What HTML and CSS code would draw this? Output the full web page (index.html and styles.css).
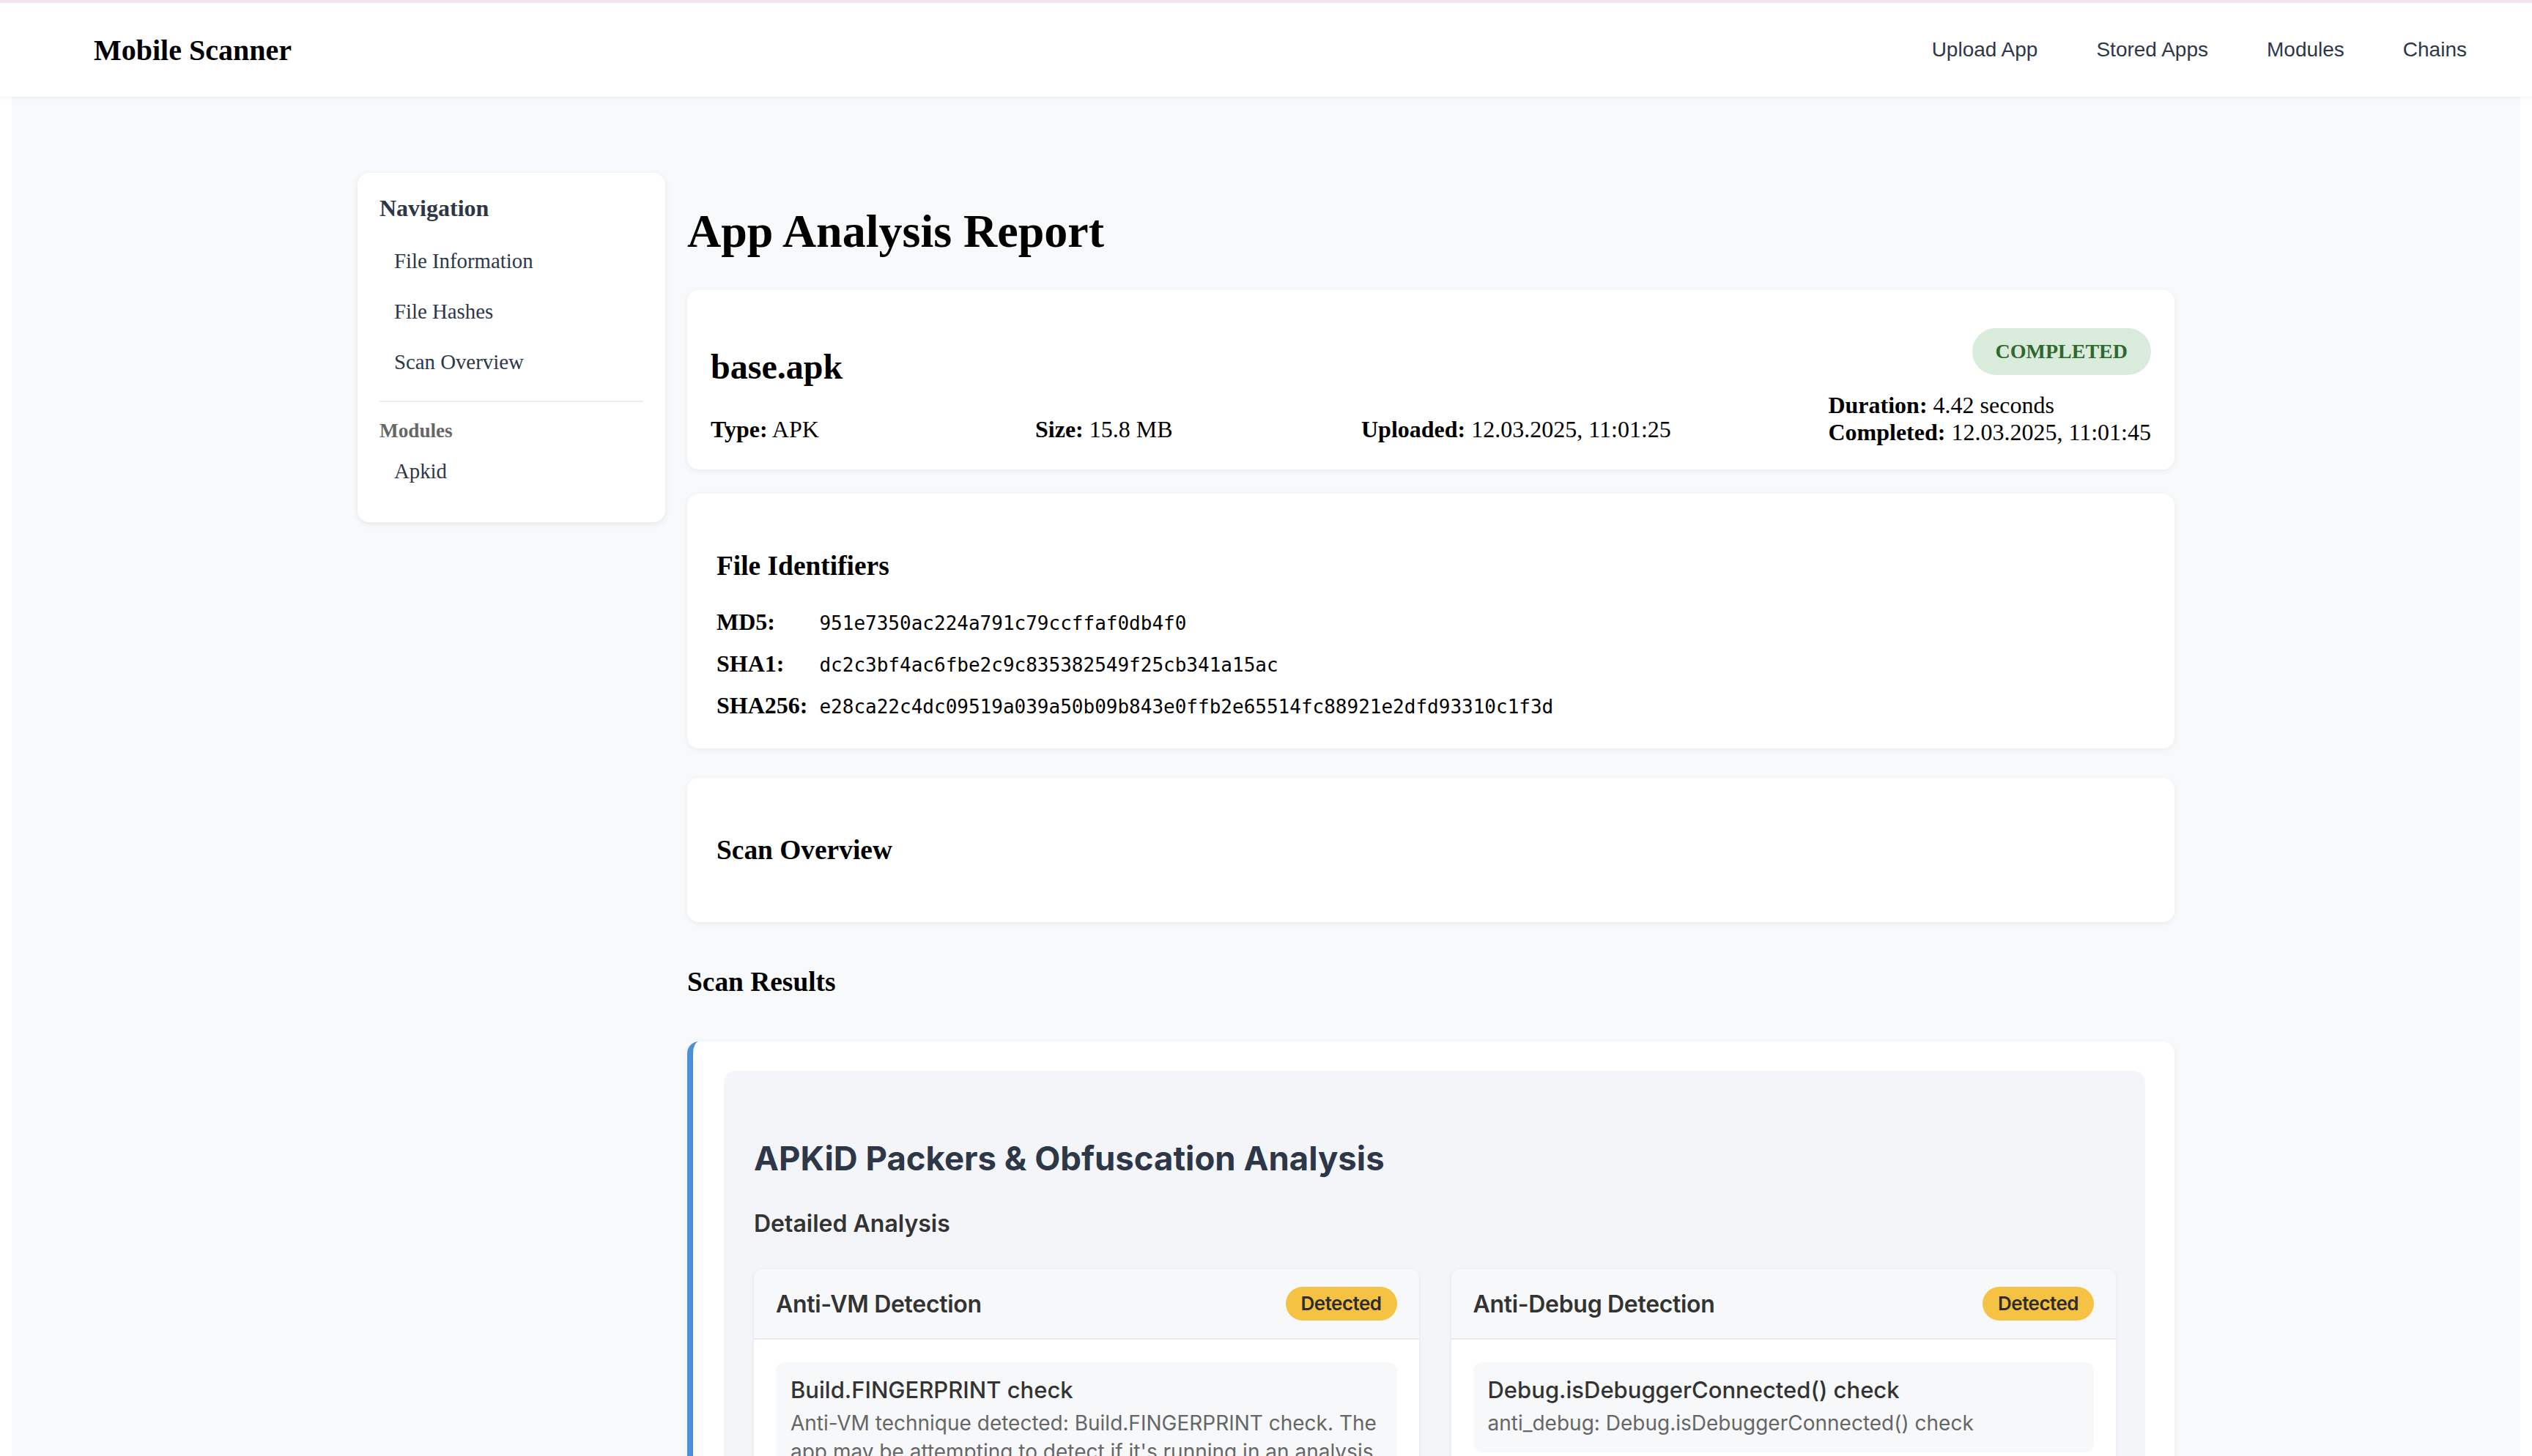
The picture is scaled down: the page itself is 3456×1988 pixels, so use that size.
FILE: index.html
```html
<!DOCTYPE html>
<html lang="en">
<head>
<meta charset="utf-8">
<title>Mobile Scanner – App Analysis Report</title>
<link rel="stylesheet" href="styles.css">
</head>
<body>
<header class="topbar">
  <div class="brand">Mobile Scanner</div>
  <nav class="topnav">
    <a href="#">Upload App</a>
    <a href="#">Stored Apps</a>
    <a href="#">Modules</a>
    <a href="#">Chains</a>
  </nav>
</header>

<div class="page">
  <div class="layout">
    <aside class="sidenav">
      <h3 class="sidenav-title">Navigation</h3>
      <a class="sidenav-link" href="#file-info">File Information</a>
      <a class="sidenav-link" href="#file-hashes">File Hashes</a>
      <a class="sidenav-link" href="#scan-overview">Scan Overview</a>
      <div class="sidenav-divider"></div>
      <div class="sidenav-section">Modules</div>
      <a class="sidenav-link" href="#apkid">Apkid</a>
    </aside>

    <main class="report">
      <h1 class="report-title">App Analysis Report</h1>

      <section class="card file-card" id="file-info">
        <div class="file-main">
          <h2 class="file-name">base.apk</h2>
          <div class="file-meta">
            <div><strong>Type:</strong> APK</div>
            <div><strong>Size:</strong> 15.8 MB</div>
            <div><strong>Uploaded:</strong> 12.03.2025, 11:01:25</div>
          </div>
        </div>
        <div class="file-status">
          <span class="status-badge">COMPLETED</span>
          <div class="timing">
            <div><strong>Duration:</strong> 4.42 seconds</div>
            <div><strong>Completed:</strong> 12.03.2025, 11:01:45</div>
          </div>
        </div>
      </section>

      <section class="card section-card ids-card" id="file-hashes">
        <h3 class="section-title">File Identifiers</h3>
        <div class="hash-list">
          <strong class="hash-label">MD5:</strong>
          <code class="hash-value">951e7350ac224a791c79ccffaf0db4f0</code>
          <strong class="hash-label">SHA1:</strong>
          <code class="hash-value">dc2c3bf4ac6fbe2c9c835382549f25cb341a15ac</code>
          <strong class="hash-label">SHA256:</strong>
          <code class="hash-value">e28ca22c4dc09519a039a50b09b843e0ffb2e65514fc88921e2dfd93310c1f3d</code>
        </div>
      </section>

      <section class="card section-card" id="scan-overview">
        <h3 class="section-title">Scan Overview</h3>
      </section>

      <h3 class="results-title">Scan Results</h3>

      <section class="module-card" id="apkid">
        <div class="module-panel">
          <h3 class="module-title">APKiD Packers &amp; Obfuscation Analysis</h3>
          <h4 class="detail-title">Detailed Analysis</h4>
          <div class="detection-grid">
            <div class="detection-card">
              <div class="detection-head">
                <span class="detection-name">Anti-VM Detection</span>
                <span class="badge-detected">Detected</span>
              </div>
              <div class="detection-body">
                <div class="finding">
                  <div class="finding-title">Build.FINGERPRINT check</div>
                  <div class="finding-desc">Anti-VM technique detected: Build.FINGERPRINT check. The app may be attempting to detect if it's running in an analysis environment.</div>
                </div>
              </div>
            </div>
            <div class="detection-card">
              <div class="detection-head">
                <span class="detection-name">Anti-Debug Detection</span>
                <span class="badge-detected">Detected</span>
              </div>
              <div class="detection-body">
                <div class="finding">
                  <div class="finding-title">Debug.isDebuggerConnected() check</div>
                  <div class="finding-desc">anti_debug: Debug.isDebuggerConnected() check</div>
                </div>
              </div>
            </div>
          </div>
        </div>
      </section>
    </main>
  </div>
</div>
</body>
</html>
```

FILE: styles.css
```css
* {
  box-sizing: border-box;
}

html {
  background: #ffffff;
}

body {
  margin: 0;
  font-family: "Liberation Serif", "Times New Roman", serif;
  font-size: 32px;
  color: #000000;
}

/* ---------- top bar ---------- */
.topbar {
  position: relative;
  z-index: 1;
  height: 132px;
  border-top: 4px solid #efe4f0;
  background: #ffffff;
  box-shadow: 0 2px 6px rgba(0, 0, 0, 0.05);
  display: flex;
  align-items: center;
  justify-content: space-between;
  padding: 0 65px 0 128px;
}

.brand {
  font-size: 40px;
  font-weight: bold;
}

.topnav {
  display: flex;
  gap: 32px;
}

.topnav a {
  font-family: "Liberation Sans", Arial, sans-serif;
  font-size: 28px;
  color: #2d3748;
  text-decoration: none;
  padding: 0 24px;
}

/* ---------- page ---------- */
.page {
  margin: 0 16px;
  background: #f8f9fa;
  padding: 104px 0 80px;
  min-height: 1856px;
}

.layout {
  max-width: 2480px;
  margin: 0 auto;
  display: flex;
  align-items: flex-start;
  gap: 30px;
}

/* ---------- side navigation ---------- */
.sidenav {
  flex: none;
  width: 420px;
  background: #ffffff;
  border-radius: 16px;
  padding: 30px 30px 35px;
  box-shadow: 0 2px 8px rgba(0, 0, 0, 0.08);
}

.sidenav-title {
  margin: 0 0 19px;
  font-size: 32px;
  line-height: 37px;
  color: #2d3748;
}

.sidenav-link {
  display: block;
  padding: 17px 20px;
  font-size: 28.8px;
  line-height: 35px;
  color: #2d3748;
  text-decoration: none;
}

.sidenav-divider {
  height: 2px;
  margin-top: 18px;
  background: #eeeeee;
}

.sidenav-section {
  margin: 23px 0 5px;
  font-size: 27.2px;
  line-height: 32px;
  font-weight: bold;
  color: #666666;
}

/* ---------- report ---------- */
.report {
  flex: 1;
  min-width: 0;
}

.report-title {
  margin: 43px 0;
  font-size: 64px;
  line-height: 74px;
}

.card {
  background: #ffffff;
  border-radius: 16px;
  box-shadow: 0 2px 8px rgba(0, 0, 0, 0.06);
}

.file-card {
  display: flex;
  justify-content: space-between;
  align-items: flex-start;
  padding: 32px;
  margin-bottom: 33px;
}

.file-name {
  margin: 45px 0 40px;
  font-size: 48px;
  line-height: 55px;
}

.file-meta {
  display: grid;
  grid-template-columns: 443px 445px auto;
  line-height: 37px;
}

.file-status {
  padding-top: 20px;
  display: flex;
  flex-direction: column;
  align-items: flex-end;
}

.status-badge {
  background: #d9ecdb;
  color: #2e6930;
  font-size: 28px;
  font-weight: bold;
  line-height: 64px;
  padding: 0 32px;
  border-radius: 32px;
}

.timing {
  margin-top: 23px;
  line-height: 37px;
}

.section-card {
  padding: 40px;
  margin-bottom: 40px;
}

.section-title {
  margin: 37px 0;
  font-size: 37.4px;
  line-height: 43px;
}

.hash-list {
  display: grid;
  grid-template-columns: auto 1fr;
  column-gap: 16px;
  row-gap: 20px;
  align-items: baseline;
}

.hash-label {
  line-height: 37px;
}

.hash-value {
  font-family: "DejaVu Sans Mono", Menlo, monospace;
  font-size: 26px;
}

.results-title {
  margin: 60px 0;
  font-size: 37.4px;
  line-height: 43px;
}

/* ---------- module result ---------- */
.module-card {
  background: #ffffff;
  border-left: 8px solid #4a90d9;
  border-radius: 16px;
  padding: 40px 40px 40px 42px;
  box-shadow: 0 2px 8px rgba(0, 0, 0, 0.06);
  font-family: Inter, "Noto Sans", sans-serif;
}

.module-panel {
  background: #f4f5f8;
  border-radius: 16px;
  padding: 40px 40px 40px 41px;
}

.module-title {
  margin: 53px 0 43px;
  font-size: 45.5px;
  line-height: 53px;
  font-weight: 700;
  color: #2d3748;
}

.detail-title {
  margin: 0 0 43px;
  font-size: 32px;
  line-height: 39px;
  font-weight: 600;
  color: #333333;
}

.detection-grid {
  display: grid;
  grid-template-columns: 1fr 1fr;
  gap: 44px;
}

.detection-card {
  background: #ffffff;
  border-radius: 12px;
  box-shadow: 0 1px 5px rgba(0, 0, 0, 0.08);
  overflow: hidden;
}

.detection-head {
  display: flex;
  justify-content: space-between;
  align-items: center;
  padding: 24px 30px;
  background: #f7f8fa;
  border-bottom: 2px solid #e9ebef;
}

.detection-name {
  font-size: 32px;
  line-height: 39px;
  font-weight: 600;
  color: #333333;
  letter-spacing: -0.01em;
}

.badge-detected {
  background: #f6c244;
  color: #2d2d2d;
  font-size: 26px;
  line-height: 46px;
  font-weight: 600;
  padding: 0 21px;
  border-radius: 23px;
  letter-spacing: -0.02em;
}

.detection-body {
  padding: 31px 30px;
}

.finding {
  background: #f7f8fa;
  border-radius: 12px;
  padding: 20px;
}

.finding-title {
  margin-bottom: 8px;
  font-size: 31px;
  line-height: 36px;
  font-weight: 500;
  color: #333333;
}

.finding-desc {
  font-size: 28px;
  line-height: 39px;
  color: #666666;
}
```
